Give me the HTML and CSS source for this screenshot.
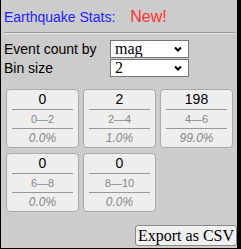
FILE: index.html
```html
<!DOCTYPE html>
<html lang="en">
<head>
  <meta charset="UTF-8" />
  <title>Earthquake Stats</title>
  <link rel="stylesheet" href="styles.css">
</head>
<body>
  <div class="panel">
    <div class="title">
      <span class="title-text">Earthquake Stats:</span>
      <span class="new">New!</span>
    </div>
    <hr>
    <div class="form">
      <label for="countBy">Event count by</label>
      <div class="select-wrap">
        <select id="countBy">
          <option>mag</option>
          <option>depth</option>
        </select>
        <svg class="chevron" width="8" height="6" viewBox="0 0 8 6"><path d="M1 1.5 L4 4.5 L7 1.5" fill="none" stroke="#000" stroke-width="2"/></svg>
      </div>
      <label for="binSize">Bin size</label>
      <div class="select-wrap">
        <select id="binSize">
          <option>2</option>
          <option>1</option>
        </select>
        <svg class="chevron" width="8" height="6" viewBox="0 0 8 6"><path d="M1 1.5 L4 4.5 L7 1.5" fill="none" stroke="#000" stroke-width="2"/></svg>
      </div>
    </div>
    <div class="bins">
      <div class="bin">
        <div class="count">0</div>
        <div class="range">0—2</div>
        <div class="pct">0.0%</div>
      </div>
      <div class="bin">
        <div class="count">2</div>
        <div class="range">2—4</div>
        <div class="pct">1.0%</div>
      </div>
      <div class="bin">
        <div class="count">198</div>
        <div class="range">4—6</div>
        <div class="pct">99.0%</div>
      </div>
      <div class="bin">
        <div class="count">0</div>
        <div class="range">6—8</div>
        <div class="pct">0.0%</div>
      </div>
      <div class="bin">
        <div class="count">0</div>
        <div class="range">8—10</div>
        <div class="pct">0.0%</div>
      </div>
    </div>
    <div class="actions">
      <button type="button">Export as CSV</button>
    </div>
  </div>
</body>
</html>
```

FILE: styles.css
```css
body {
  margin: 0;
  font-family: "Liberation Sans", Arial, sans-serif;
}
.panel {
  width: 241px;
  height: 249px;
  box-sizing: border-box;
  background-color: #cccccc;
  border-left: 1px solid #000;
  border-right: 4px solid #000;
  border-bottom: 1px solid #000;
}
.title {
  display: flex;
  align-items: baseline;
  gap: 15px;
  height: 32px;
  box-sizing: border-box;
  padding: 8px 0 0 3px;
}
.title-text {
  font-size: 14px;
  color: #2222ff;
}
.new {
  font-size: 16px;
  color: #ff3333;
}
hr {
  border: 0;
  border-top: 1px solid #999;
  border-bottom: 1px solid #e6e6e6;
  margin: 0 2px 0 3px;
}
.form {
  display: grid;
  grid-template-columns: 106px 79px;
  grid-auto-rows: 18px;
  row-gap: 1px;
  margin: 6px 0 0 3px;
  font-size: 14px;
  align-items: center;
}
.select-wrap {
  position: relative;
  height: 18px;
}
select {
  appearance: none;
  width: 79px;
  height: 18px;
  box-sizing: border-box;
  border: 1px solid #767676;
  border-radius: 0;
  background: #fff;
  padding: 0 0 0 4px;
  font-family: "Liberation Serif", "Times New Roman", serif;
  font-size: 16px;
  line-height: 16px;
  color: #000;
}
.chevron {
  position: absolute;
  right: 7px;
  top: 6px;
  pointer-events: none;
}
.bins {
  display: grid;
  grid-template-columns: repeat(3, 73px);
  column-gap: 4px;
  row-gap: 5px;
  margin: 12px 0 0 5px;
}
.bin {
  box-sizing: border-box;
  height: 59px;
  background: #eeeeee;
  border: 1px solid #aaaaaa;
  border-radius: 4px;
  padding: 0 5px;
  text-align: center;
}
.count {
  height: 19px;
  line-height: 19px;
  font-size: 14px;
  color: #000;
  border-bottom: 1px solid #999;
}
.range {
  height: 18px;
  line-height: 18px;
  font-size: 11px;
  color: #888;
  border-bottom: 1px solid #999;
}
.pct {
  height: 18px;
  line-height: 18px;
  font-size: 12px;
  font-style: italic;
  color: #888;
}
.actions {
  display: flex;
  justify-content: flex-end;
  margin-top: 13px;
}
button {
  height: 21px;
  padding: 0 2px;
  border: 1px solid #8a8a8a;
  border-radius: 3px;
  background: #f0f0f0;
  font-family: "Liberation Serif", "Times New Roman", serif;
  font-size: 16px;
  color: #000;
}
```
